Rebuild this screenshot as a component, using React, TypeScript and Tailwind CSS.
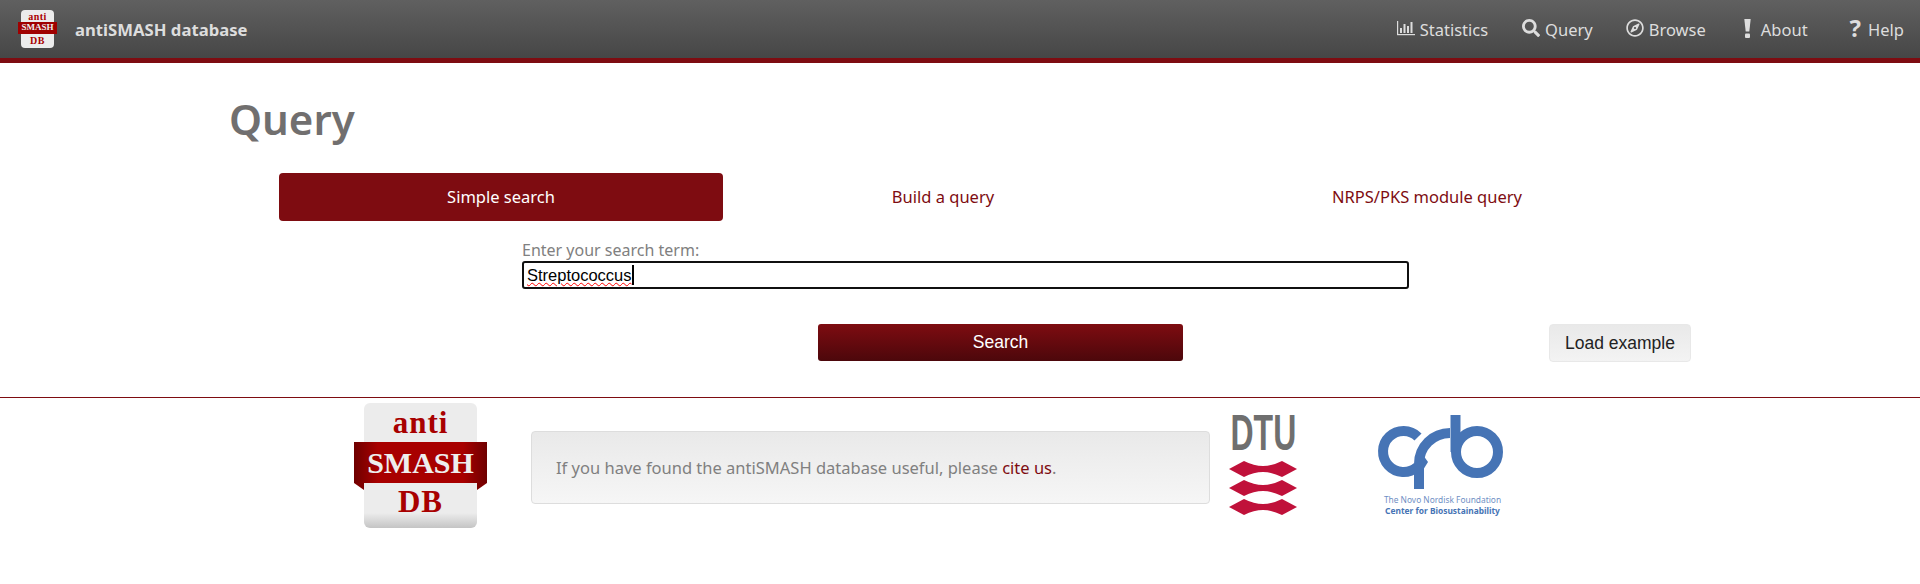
import React from "react";
import { FaSearch, FaRegCompass } from "react-icons/fa";

const uiFont = "font-['Noto_Sans','Open_Sans',sans-serif]";

const StatsIcon = () => (
  <svg width="18" height="16" viewBox="0 0 18 16" fill="currentColor">
    <rect x="0" y="1" width="1.2" height="14" />
    <rect x="0" y="14" width="18" height="1.2" />
    <rect x="3" y="8" width="2" height="5" />
    <rect x="6.500" y="4" width="2" height="9" />
    <rect x="10" y="6" width="2" height="7" />
    <rect x="13.500" y="2" width="2" height="11" />
  </svg>
);

const BangIcon = () => (
  <svg width="7" height="19" viewBox="0 0 7 19" fill="currentColor">
    <path d="M0.300 0 H6.700 L5.300 12.500 H1.700 Z" />
    <rect x="1" y="14.500" width="5" height="4.500" rx="1" />
  </svg>
);

const NavItem = ({ icon, label, gap }: { icon: React.ReactNode; label: string; gap: string }) => (
  <a className={`flex items-center text-[16.5px] text-[#dddddd] ${gap}`}>
    <span className="flex items-center -mt-[5px]">{icon}</span>
    {label}
  </a>
);

const SmashLogo = () => (
  <div className="relative w-[134px] h-[125px] font-['Liberation_Serif',serif] font-bold text-[#a80000]">
    <div className="absolute left-[10px] top-0 w-[113px] h-[125px] rounded-md bg-[linear-gradient(#ececec_0%,#ececec_88%,#c4c4c4_100%)] flex flex-col items-center">
      <span className="text-[31px] leading-[38px] mt-[1px] tracking-[1px]">anti</span>
      <span className="text-[31px] leading-[38px] mt-[41px] tracking-[1px]">DB</span>
    </div>
    <div className="absolute left-0 top-[39px] w-[133px] h-[41px] bg-[linear-gradient(90deg,#6e0000,#a80000_18%,#a80000_82%,#6e0000)] flex items-center justify-center text-[#eeeeee] text-[30px]">
      SMASH
    </div>
    <svg className="absolute left-0 top-[80px]" width="133" height="8" viewBox="0 0 133 8" fill="#7d0000">
      <polygon points="0,0 10,0 10,7" />
      <polygon points="133,0 123,0 123,7" />
    </svg>
  </div>
);

const SmallLogo = () => (
  <div className="relative w-[39px] h-[38px] font-['Liberation_Serif',serif] font-bold text-[#a80000]">
    <div className="absolute left-[3px] top-0 w-[33px] h-[38px] rounded-sm bg-[#ececec] flex flex-col items-center">
      <span className="text-[10px] leading-[12px] mt-[1px] tracking-[0.5px]">anti</span>
      <span className="text-[10px] leading-[12px] mt-[12px] tracking-[0.5px]">DB</span>
    </div>
    <div className="absolute left-0 top-[12px] w-[39px] h-[12px] bg-[#a00000] flex items-center justify-center text-[#eeeeee] text-[9px]">
      SMASH
    </div>
  </div>
);

const DtuLogo = () => (
  <div className="flex flex-col items-center w-[68px]">
    <span className="font-['Liberation_Sans',sans-serif] font-bold text-[#6f6f6f] text-[50px] leading-[40px] h-[40px] scale-x-[0.64]">
      DTU
    </span>
    <svg className="mt-[8px]" width="68" height="54" viewBox="0 0 68 54" fill="#c0113a">
      <path d="M0 8 L15 0 Q25 5 34 5 Q43 5 53 0 L68 8 L53 16 Q43 11 34 11 Q25 11 15 16 Z" />
      <path d="M0 27 L15 19 Q25 24 34 24 Q43 24 53 19 L68 27 L53 35 Q43 30 34 30 Q25 30 15 35 Z" />
      <path d="M0 46 L15 38 Q25 43 34 43 Q43 43 53 38 L68 46 L53 54 Q43 49 34 49 Q25 49 15 54 Z" />
    </svg>
  </div>
);

const CfbLogo = () => (
  <div className="flex flex-col items-center w-[135px]">
    <svg width="135" height="78" viewBox="1375 413 135 78" fill="none" stroke="#4674b5" strokeWidth="10">
      <path d="M1418 437 A20.500 20.500 0 1 0 1417 467" />
      <path d="M1419 489 V464 A31 31 0 0 1 1450 433" />
      <circle cx="1477" cy="452" r="21" />
      <path d="M1455.500 415 V452" />
      <path d="M1423 455 L1428 462 L1423 470 Z" fill="#4674b5" stroke="none" />
    </svg>
    <span className="mt-[3px] text-[8.4px] leading-[11px] text-[#6f8fc4] whitespace-nowrap">
      The Novo Nordisk Foundation
    </span>
    <span className="font-bold text-[8.4px] leading-[11px] text-[#4674b5] whitespace-nowrap">
      Center for Biosustainability
    </span>
  </div>
);

export default function App() {
  return (
    <div className={`bg-white min-h-[584px] ${uiFont}`}>
      <nav className="h-[63px] border-b-[5px] border-[#7e0c11] bg-[linear-gradient(#606060,#464646)] flex items-center">
        <div className="ml-[18px]">
          <SmallLogo />
        </div>
        <span className="ml-[18px] pt-[2px] text-[16.7px] font-bold text-[#dddddd]">antiSMASH database</span>
        <div className="ml-auto mr-[16px] pt-[3px] flex items-center">
          <NavItem icon={<StatsIcon />} label="Statistics" gap="gap-[5px]" />
          <div className="ml-[34px]">
            <NavItem icon={<FaSearch size={18} />} label="Query" gap="gap-[5px]" />
          </div>
          <div className="ml-[33px]">
            <NavItem icon={<FaRegCompass size={18} />} label="Browse" gap="gap-[5px]" />
          </div>
          <div className="ml-[38px]">
            <NavItem icon={<BangIcon />} label="About" gap="gap-[10px]" />
          </div>
          <div className="ml-[42px]">
            <NavItem icon={<span className="text-[24px] font-bold leading-none">?</span>} label="Help" gap="gap-[7px]" />
          </div>
        </div>
      </nav>

      <main className="h-[335px] border-b border-[#7e0c11] pt-[25px]">
        <h1 className="ml-[229px] text-[42px] leading-[62px] font-semibold text-[#716f6f]">Query</h1>

        <div className="ml-[279px] mt-[23px] flex text-[16.5px] text-[#7e0c11]">
          <div className="w-[444px] h-[48px] rounded-[4px] bg-[#7e0c11] text-white flex items-center justify-center">
            Simple search
          </div>
          <div className="w-[440px] h-[48px] flex items-center justify-center">Build a query</div>
          <div className="w-[528px] h-[48px] flex items-center justify-center">NRPS/PKS module query</div>
        </div>

        <div className="ml-[522px] mt-[19px] w-[887px]">
          <label className="block text-[16px] leading-[21px] text-[#808080]">Enter your search term:</label>
          <div className="h-[28px] border-2 border-[#101010] rounded-[3px] flex items-center pl-[3px] font-['Liberation_Sans',sans-serif] text-[16.5px] text-black">
            <span className="underline decoration-wavy decoration-[#ff0000] decoration-[1.2px] underline-offset-[1px] border-r-2 border-black leading-[20px]">
              Streptococcus
            </span>
          </div>
        </div>

        <div className="mt-[35px] flex items-start font-['Liberation_Sans',sans-serif] text-[17.5px]">
          <button className="ml-[818px] w-[365px] h-[37px] rounded-[3px] bg-[linear-gradient(#7e0c11,#4c070b)] text-white">
            Search
          </button>
          <button className="ml-[366px] w-[142px] h-[38px] rounded-[4px] border border-[#e8e8e8] bg-[linear-gradient(#e9e9e9,#f3f3f3)] text-[#222222]">
            Load example
          </button>
        </div>
      </main>

      <footer className="flex items-start">
        <div className="ml-[354px] mt-[5px]">
          <SmashLogo />
        </div>
        <div className="ml-[43px] mt-[33px] w-[679px] h-[73px] rounded-[4px] border border-[#dddddd] bg-[linear-gradient(#e9e9e9,#f6f6f6)] flex items-center pl-[24px] pt-[1px] text-[16.5px] text-[#808080]">
          <span>
            If you have found the antiSMASH database useful, please <a className="text-[#7e0c11]">cite us</a>.
          </span>
        </div>
        <div className="ml-[19px] mt-[15px]">
          <DtuLogo />
        </div>
        <div className="ml-[78px] mt-[15px]">
          <CfbLogo />
        </div>
      </footer>
    </div>
  );
}
